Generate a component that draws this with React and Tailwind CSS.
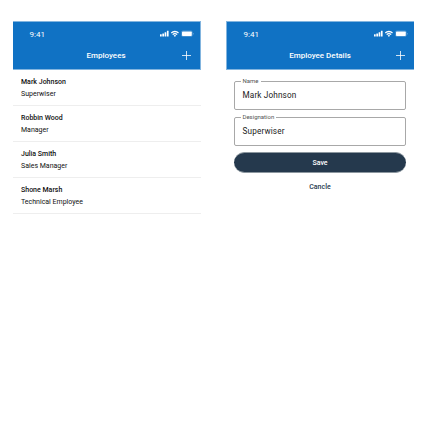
import React from "react";

const employees = [
  { name: "Mark Johnson", role: "Superwiser" },
  { name: "Robbin Wood", role: "Manager" },
  { name: "Julia Smith", role: "Sales Manager" },
  { name: "Shone Marsh", role: "Technical Employee" },
];

function StatusIcons() {
  return (
    <svg width="34" height="8" viewBox="0 0 34 8" className="block" fill="#fff">
      <rect x="0" y="4.2" width="1.7" height="2.3" rx="0.3" />
      <rect x="2.3" y="3.5" width="1.7" height="3" rx="0.3" />
      <rect x="4.6" y="2.2" width="1.7" height="4.3" rx="0.3" />
      <rect x="6.9" y="0.8" width="1.7" height="5.7" rx="0.3" />
      <g fill="none" stroke="#fff" strokeWidth="1.3">
        <path d="M11.3 3a5.1 5.1 0 0 1 7.2 0" />
        <path d="M12.7 4.6a3.1 3.1 0 0 1 4.4 0" />
      </g>
      <path d="M13.7 5.5a1.7 1.7 0 0 1 2.4 0L14.9 6.9z" />
      <rect x="21.4" y="0.9" width="11" height="5.6" rx="1.5" fill="none" stroke="#fff" strokeOpacity="0.4" strokeWidth="0.5" />
      <rect x="22" y="1.5" width="9.8" height="4.4" rx="0.7" />
      <path d="M33 3v1.7a.9.9 0 0 0 0-1.7z" opacity="0.5" />
    </svg>
  );
}

function Header({ title, edge }) {
  return (
    <header className={`h-[49px] border-y border-[#83b5df] bg-[#1072c4] text-white ${edge}`}>
      <div className="flex h-[23px] items-start justify-between pl-[16.5px] pr-[6px]">
        <span className="pt-2 text-[8px] leading-[10px]">9:41</span>
        <span className="pt-2">
          <StatusIcons />
        </span>
      </div>
      <div className="grid h-5 grid-cols-[1fr_auto_1fr] items-center pr-[9px]">
        <span />
        <h1 className="pl-[8px] pt-[2px] text-[8px] font-medium leading-[10px]">{title}</h1>
        <svg width="9" height="9" viewBox="0 0 9 9" className="justify-self-end" stroke="#fff" strokeWidth="0.8">
          <path d="M4.5 0v9M0 4.5h9" />
        </svg>
      </div>
    </header>
  );
}

function Field({ label, value }) {
  return (
    <fieldset className="h-[32px] rounded-[2px] border border-[#a8a8a8] pl-[5.5px]">
      <legend className="h-[6px] px-[2px] text-[6px] leading-[6px] text-[#555]">{label}</legend>
      <div className="pl-[2px] pt-[6px] text-[8.2px] leading-[10px] tracking-[0.15px] text-[#222]">{value}</div>
    </fieldset>
  );
}

export default function App() {
  return (
    <main className="flex h-[441px] w-[428px] items-start overflow-hidden bg-white pl-[13px] pt-[21px] font-[Roboto,sans-serif]">
      <section className="w-[188px]">
        <Header title="Employees" edge="border-r" />
        <ul>
          {employees.map((e) => (
            <li key={e.name} className="h-9 border-b border-[#eeeeee] pl-2 pt-[6px] text-[7px] leading-3 text-[#111]">
              <div className="font-medium">{e.name}</div>
              <div>{e.role}</div>
            </li>
          ))}
        </ul>
      </section>
      <section className="ml-[25px] w-[188px]">
        <Header title="Employee Details" edge="border-l" />
        <form className="flex flex-col px-2 pt-2">
          <Field label="Name" value="Mark Johnson" />
          <div className="h-1" />
          <Field label="Designation" value="Superwiser" />
          <button type="button" className="mt-[6px] h-[21px] rounded-full border-y border-[#8c979f] bg-[#25394d] pt-px text-[7px] font-medium leading-[18px] text-white">
            Save
          </button>
          <button type="button" className="mt-[9px] h-[10px] text-[7px] font-medium leading-[10px] text-[#25394d]">
            Cancle
          </button>
        </form>
      </section>
    </main>
  );
}
